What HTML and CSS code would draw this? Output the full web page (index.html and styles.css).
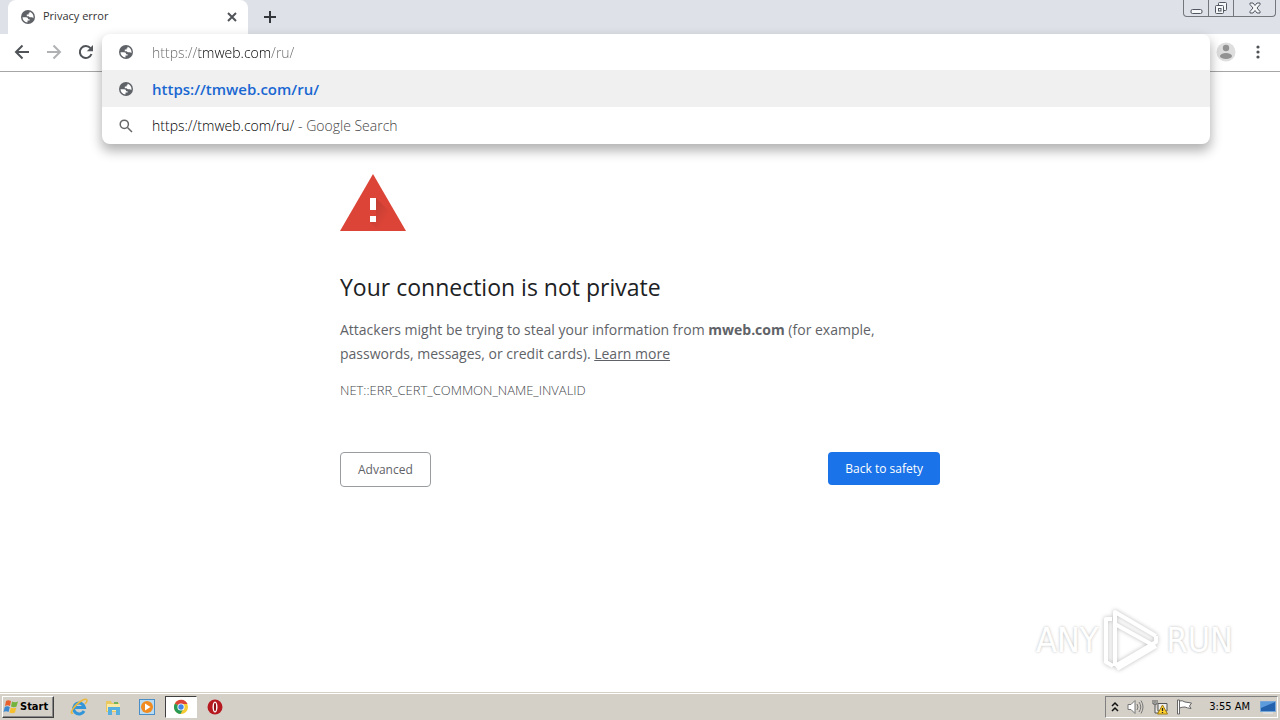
FILE: index.html
```html
<!DOCTYPE html>
<html lang="en">
<head>
<meta charset="utf-8">
<title>Privacy error</title>
<link rel="stylesheet" href="styles.css">
</head>
<body>
<svg width="0" height="0" class="defs" aria-hidden="true">
  <symbol id="globe" viewBox="0 0 16 16">
    <circle cx="8" cy="8" r="7"/>
    <path fill="#fff" d="M2.500 8.300H6.200Q8.200 8.300 8.200 10.200H9.600V11.600H7.500V13.500C4.500 13.200 2.500 11 2.500 8.300Z M9.500 2.700C12 3.400 13.500 5.500 13.500 8L13.300 9.200C12.800 8.400 12.300 8.200 11.500 8.200H9.800L8.600 7.200H6.800V5.500H8.600V4.300H9.500Z"/>
  </symbol>
</svg>
<header>
  <div class="tabstrip">
    <div class="tab">
      <svg class="favicon" viewBox="0 0 16 16"><use href="#globe"/></svg>
      <span class="tab-title">Privacy error</span>
      <button class="plain" aria-label="Close tab"><svg width="10" height="10" viewBox="0 0 10 10"><path class="line" d="M1 1L9 9M9 1L1 9"/></svg></button>
    </div>
    <button class="plain new-tab" aria-label="New tab"><svg width="12" height="12" viewBox="0 0 12 12"><path class="line" d="M6 0V12M0 6H12"/></svg></button>
    <div class="window-controls">
      <button aria-label="Minimize"><svg width="13" height="14" viewBox="0 0 13 14"><rect x="1" y="8.5" width="11" height="4" rx="1.5"/></svg></button>
      <button aria-label="Restore"><svg width="14" height="14" viewBox="0 0 14 14"><path d="M4.5 4.5V2.5Q4.500 1.500 5.500 1.500H11.500Q12.500 1.500 12.500 2.500V8.500Q12.500 9.500 11.500 9.500H9.500"/><rect x="1.500" y="4.500" width="8" height="8" rx="1"/><rect x="4.500" y="7.500" width="2.500" height="2.500"/></svg></button>
      <button class="close" aria-label="Close"><svg width="12" height="12" viewBox="0 0 12 12"><path d="M1 1H4L6 3.500L8 1H11V2.500L8 6L11 9.500V11H8L6 8.500L4 11H1V9.500L4 6L1 2.500Z"/></svg></button>
    </div>
  </div>
  <div class="toolbar">
    <nav>
      <button class="plain" aria-label="Back"><svg width="16" height="16" viewBox="0 0 16 16"><path class="line" d="M15 8H2M8.500 1.500L2 8L8.500 14.500"/></svg></button>
      <button class="plain dim" aria-label="Forward"><svg width="16" height="16" viewBox="0 0 16 16"><path class="line" d="M1 8H14M7.500 1.500L14 8L7.500 14.500"/></svg></button>
      <button class="plain" aria-label="Reload"><svg width="16" height="16" viewBox="0 0 16 16"><path class="line" d="M13.500 10A6 6 0 1 1 12.500 4.200"/><path fill="#55585c" d="M15 1V7.200H8.800Z"/></svg></button>
    </nav>
    <form class="omnibox">
      <div class="popup">
        <div class="row">
          <svg class="row-icon" viewBox="0 0 16 16"><use href="#globe"/></svg>
          <input class="address" type="text" aria-label="Address and search bar" value="https://tmweb.com/ru/">
        </div>
        <a class="row selected" href="#"><svg class="row-icon" viewBox="0 0 16 16"><use href="#globe"/></svg><b>https://tmweb.com/ru/</b></a>
        <a class="row" href="#"><svg class="row-icon" viewBox="0 0 16 16"><path class="thin" d="M9.500 9.500L14 14"/><circle class="thin" cx="6.300" cy="6.300" r="4.100"/></svg><span>https://tmweb.com/ru/<span class="note"> - Google Search</span></span></a>
      </div>
    </form>
    <div class="tools">
      <button class="plain" aria-label="Profile"><svg width="20" height="20" viewBox="0 0 20 20"><circle cx="10" cy="10" r="9.500" fill="#dedede"/><circle cx="10" cy="6" r="3.200" fill="#929292"/><ellipse cx="10" cy="14" rx="6" ry="3" fill="#929292"/></svg></button>
      <button class="plain" aria-label="Menu"><svg width="4" height="14" viewBox="0 0 4 14" fill="#505356"><circle cx="2" cy="2" r="1.600"/><circle cx="2" cy="7" r="1.600"/><circle cx="2" cy="12" r="1.600"/></svg></button>
    </div>
  </div>
</header>
<main>
  <section class="warning">
    <svg width="66" height="57" viewBox="0 0 66 57"><defs><linearGradient id="shade" x1="0" y1="0" x2="1" y2="1"><stop offset="0" stop-color="#b83a30"/><stop offset=".7" stop-color="#db4437"/></linearGradient></defs><path fill="#db4437" d="M33 0L66 57H0Z"/><path fill="url(#shade)" d="M36 24L50 38L47 57H39L30 48L36 42Z"/><path fill="#fff" d="M30 24h6v12h-6zM30 42h6v6h-6z"/></svg>
    <h1>Your connection is not private</h1>
    <p>Attackers might be trying to steal your information from <strong>mweb.com</strong> (for example, passwords, messages, or credit cards). <a href="#">Learn more</a></p>
    <div class="code">NET::ERR_CERT_COMMON_NAME_INVALID</div>
    <div class="actions"><button class="secondary">Advanced</button><button class="primary">Back to safety</button></div>
  </section>
  <div class="watermark"><span>ANY</span>
    <svg width="60" height="64" viewBox="0 0 60 64"><path d="M10 11H4V54L11 58M13 58V4L54 28M13 16L49 36M13 58L54 34V28M15 61L54 38"/></svg>
    <span>RUN</span></div>
</main>
<footer>
  <button class="start"><svg width="16" height="16" viewBox="0 0 16 16"><path fill="#e8602c" d="M3 2Q5 .5 8 2L7 7Q4.500 5.500 2 7Z"/><path fill="#75b43c" d="M9 2.500Q12 4 15 2.500L13.500 7.500Q11 9 8 7.500Z"/><path fill="#3b88cf" d="M1.800 8Q4 6.500 6.800 8L5.500 13Q3 11.500.5 13Z"/><path fill="#f5bf2d" d="M7.800 8.500Q11 10 13.300 8.500L12 13.500Q9 15 6.500 13.500Z"/></svg>Start</button>
  <div class="apps">
    <button aria-label="Internet Explorer"><svg viewBox="0 0 18 18"><path fill="none" stroke="#3295d8" stroke-width="3" d="M14 13A5.500 5.500 0 1 1 14.500 9.500H5"/><path fill="none" stroke="#e9b83c" stroke-width="1.500" d="M3 15C-2 17 5 6 12 2.500C18-.5 18 3 15 6"/></svg></button>
    <button aria-label="File Explorer"><svg viewBox="0 0 18 18"><path fill="#e9c85f" d="M2 3H7L8 5H15V14H2Z"/><path fill="#f9e9a4" d="M3 6H16V13H3Z"/><path fill="#57afe0" d="M4 9H16V17H12V12H8V17H4Z"/><path fill="#75b35b" d="M10 4H14V6H10Z"/></svg></button>
    <button aria-label="Media Player"><svg viewBox="0 0 18 18"><rect x="1.500" y="1.500" width="15" height="15" fill="#b9dcf3" stroke="#4b8ec5"/><circle cx="9" cy="9" r="6" fill="#f18b20"/><path fill="#fff" d="M7 5.500L12.500 9L7 12.500Z"/></svg></button>
    <button class="active" aria-label="Chrome"><svg viewBox="0 0 18 18"><circle cx="9" cy="9" r="7" fill="#f6ca32"/><path fill="#dc4437" d="M9 9L2.900 5.500A7 7 0 0 1 15.500 6H9Z"/><path fill="#299a56" d="M2.900 5.500A7 7 0 0 0 8.500 16L11.500 10.500L9 9Z"/><circle cx="9" cy="9" r="3.600" fill="#fff"/><circle cx="9" cy="9" r="2.700" fill="#4285e7"/></svg></button>
    <button aria-label="Opera"><svg viewBox="0 0 18 18"><circle cx="9" cy="9" r="7.500" fill="#b71920"/><ellipse cx="9" cy="9" rx="2.500" ry="5.500" fill="#fff"/><ellipse cx="9" cy="9" rx="1.100" ry="4.200" fill="#8d1015"/></svg></button>
  </div>
  <div class="tray">
    <svg width="8" height="12" viewBox="0 0 8 12"><path fill="none" stroke="#111" stroke-width="1.500" d="M1 5L4 2L7 5M1 10L4 7L7 10"/></svg>
    <svg width="17" height="16" viewBox="0 0 17 16"><path fill="#fff" stroke="#777" d="M1 5.500H4L8 1.500V14.500L4 10.500H1Z"/><path fill="none" stroke="#777" d="M10 5Q12 8 10 11M12 3Q15.500 8 12 13M14 1.500Q18 8 14 14.500"/></svg>
    <svg width="16" height="16" viewBox="0 0 16 16"><path fill="#eee" stroke="#555" d="M1 1V5H3V14H6M3 1V4M5 1V5H3M6 4.500H15V12H6Z"/><path fill="#ffd22e" stroke="#a17a12" d="M10.500 6L15.500 15H5.500Z"/><path stroke="#222" stroke-width="1.300" d="M10.500 9V12M10.500 13V14"/></svg>
    <svg width="17" height="16" viewBox="0 0 17 16"><path fill="#fff" stroke="#666" d="M1.500 1H3.500V15H1.500ZM3.500 2Q6 1 9 3L15.500 4L13.500 7L15 9.500Q11 9 9 8Q6 8 3.500 9Z"/></svg>
    <time>3:55 AM</time>
    <svg width="16" height="16" viewBox="0 0 16 16"><path fill="#2462ad" stroke="#76a7d8" d="M.5 2.500H15.500V12.500H.5Z"/><path fill="#5c9cdd" d="M1 3H15L1 9Z"/><path fill="#ddd" d="M3 13H13V15H3Z"/></svg>
  </div>
</footer>
</body>
</html>
```
FILE: styles.css
```css
* { box-sizing: border-box; }
body { margin: 0; min-height: 100vh; display: flex; flex-direction: column; background: #fff; font-family: "Open Sans", "Noto Sans", sans-serif; }
button { font: inherit; padding: 0; }
svg { display: block; flex: none; }
.defs { position: absolute; }
.plain { border: 0; background: none; display: flex; }
.line { fill: none; stroke: #505458; stroke-width: 2; }
.dim { opacity: .45; }
.tabstrip { height: 34px; background: #dee1e7; display: flex; padding-left: 8px; }
.tab { width: 240px; background: #fff; border-radius: 8px 8px 0 0; display: flex; align-items: center; padding: 0 11px 0 12px; gap: 7px; }
.tab-title { flex: 1; font-size: 11px; line-height: 14px; padding-bottom: 2px; color: #333; }
.favicon, .row-icon { width: 16px; height: 16px; fill: #5f6368; }
.new-tab { align-items: center; margin-left: 16px; }
.new-tab .line { stroke: #34373b; }
.window-controls { margin: 0 4px 0 auto; height: 17px; display: flex; border: 1px solid #73777c; border-top: 0; border-radius: 0 0 4px 4px; }
.window-controls button { width: 25px; border: 0; border-right: 1px solid #73777c; background: none; display: flex; align-items: center; justify-content: center; }
.window-controls .close { width: 41px; border-right: 0; }
.window-controls svg { fill: #f6f7f9; stroke: #515761; }
.toolbar { height: 38px; border-bottom: 1px solid #a6a6a6; display: flex; }
nav { width: 102px; padding: 0 0 1px 14px; display: flex; gap: 16px; align-items: center; }
.omnibox { flex: 1; position: relative; margin: 0; }
.popup { position: absolute; inset: 0 0 auto; background: #fff; border-radius: 8px; overflow: hidden; box-shadow: 0 6px 12px 1px #0000004d; }
.row { height: 37px; padding-left: 16px; display: flex; align-items: center; gap: 18px; font-size: 14px; font-weight: 300; color: #000; text-decoration: none; }
.row:first-child { height: 36px; }
.selected { background: #f0f0f0; color: #1967d2; }
.row b { font-size: 15px; font-weight: 600; }
.note { color: #444; }
.thin { fill: none; stroke: #666; stroke-width: 1.5; }
.address { flex: 1; border: 0; outline: 0; padding: 0; font: inherit; color: transparent; background: linear-gradient(90deg, #666 47px, #000 47px 119px, #666 119px); -webkit-background-clip: text; background-clip: text; }
.tools { width: 70px; padding: 0 0 1px 6px; display: flex; align-items: center; gap: 20px; }
main { flex: 1; position: relative; padding: 102px 20px 0; }
.warning { max-width: 600px; margin: 0 auto; color: #5f6368; }
h1 { margin: 40px 0 15px; font-size: 23px; line-height: 32px; font-weight: 400; color: #202124; }
p { margin: 0; font-size: 14px; line-height: 24px; }
p a { color: inherit; }
strong { font-weight: 700; }
.code { margin-top: 14px; font-size: 13px; line-height: 20px; font-weight: 300; color: #44474b; }
.actions { margin-top: 52px; display: flex; justify-content: space-between; align-items: flex-start; }
.actions button { font-size: 12px; border-radius: 4px; padding: 0 17px; }
.secondary { height: 35px; border: 1px solid #999da1; background: #fff; color: #5f6368; }
.primary { height: 33px; border: 0; background: #1a73e8; color: #fff; }
.watermark { position: absolute; right: 47px; bottom: 20px; display: flex; align-items: center; gap: 4px; color: #fff; font: 34px "DejaVu Sans Condensed", sans-serif; text-shadow: 0 0 3px #bbb; }
.watermark svg { fill: none; stroke: #fff; stroke-width: 4; stroke-linejoin: round; filter: drop-shadow(0 0 2px #bbb); }
footer { height: 28px; background: #d4d0c8; border-top: 1px solid #d4d0c8; box-shadow: inset 0 1px #fff; display: flex; align-items: center; padding: 0 2px; }
.start { width: 52px; height: 22px; border: 1px solid #fff; border-right-color: #404040; border-bottom-color: #404040; background: #d4d0c8; box-shadow: inset -1px -1px #888; display: flex; align-items: center; gap: 1px; font: bold 11px "DejaVu Sans Condensed", sans-serif; color: #000; }
.apps { display: flex; margin-left: 9px; gap: 2px; flex: 1; }
.apps button { width: 32px; height: 22px; border: 1px solid transparent; background: none; display: flex; align-items: center; justify-content: center; }
.apps svg { width: 18px; height: 18px; }
.apps .active { border-color: #404040 #fff #fff #404040; background: #fff; }
.tray { height: 22px; border: 1px solid #808080; border-right-color: #fff; border-bottom-color: #fff; padding: 0 1px 0 5px; display: flex; align-items: center; gap: 8px; }
time { font: 11px "DejaVu Sans Condensed", sans-serif; color: #000; margin: 0 2px 0 8px; }
```
